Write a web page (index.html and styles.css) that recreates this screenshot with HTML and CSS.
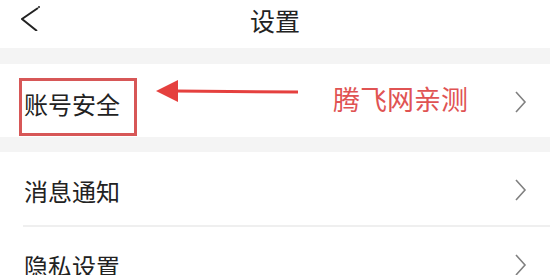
FILE: index.html
```html
<!DOCTYPE html>
<html lang="zh-CN">
<head>
<meta charset="utf-8">
<link rel="stylesheet" href="styles.css">
</head>
<body>
<div class="page">
  <header class="header">
    <svg class="back" width="20" height="28" viewBox="0 0 20 28"><polyline points="17,5 1,16 16,28" fill="none" stroke="#222" stroke-width="2"/><circle cx="18" cy="4" r="1" fill="#222"/></svg>
    <h1 class="title">设置</h1>
  </header>
  <div class="gap gap-top"></div>
  <div class="row row-first">
    <span class="label">账号安全</span>
    <svg class="chev" width="13" height="22" viewBox="0 0 13 22"><polyline points="2,1 11,11 2,21" fill="none" stroke="#808080" stroke-width="1.6"/></svg>
    <div class="mark-box"></div>
    <svg class="mark-arrow" width="144" height="24" viewBox="0 0 144 24"><polygon points="0,11 22,0 22,22" fill="#e5403e"/><line x1="20" y1="11" x2="142" y2="12" stroke="#e5403e" stroke-width="3"/></svg>
    <span class="mark-text">腾飞网亲测</span>
  </div>
  <div class="gap gap-mid"></div>
  <div class="row">
    <span class="label">消息通知</span>
    <svg class="chev" width="13" height="22" viewBox="0 0 13 22"><polyline points="2,1 11,11 2,21" fill="none" stroke="#808080" stroke-width="1.6"/></svg>
  </div>
  <div class="sep"></div>
  <div class="row">
    <span class="label">隐私设置</span>
    <svg class="chev" width="13" height="22" viewBox="0 0 13 22"><polyline points="2,1 11,11 2,21" fill="none" stroke="#808080" stroke-width="1.6"/></svg>
  </div>
</div>
</body>
</html>
```

FILE: styles.css
```css
* { box-sizing: border-box; }
html, body { margin: 0; padding: 0; background: #fff; }
body {
  font-family: "Noto Sans CJK SC", "Noto Sans", sans-serif;
  color: #222;
  width: 550px;
  height: 275px;
  overflow: hidden;
}
.page { display: flex; flex-direction: column; }
.header {
  position: relative;
  height: 48px;
  display: flex;
  align-items: center;
  justify-content: center;
}
.back { position: absolute; left: 21px; top: 3px; }
.title {
  margin: 0;
  font-size: 25px;
  font-weight: 400;
  line-height: 1;
  margin-top: -7px;
  color: #222;
}
.gap { background: #f4f4f4; }
.gap-top { height: 16px; }
.gap-mid { height: 15px; }
.row {
  position: relative;
  height: 73px;
  flex: 0 0 auto;
  display: flex;
  align-items: center;
  justify-content: space-between;
  padding: 0 23px 0 24px;
  background: #fff;
}
.label { font-size: 24px; line-height: 1; color: #222; margin-top: 4px; }
.row-first .label { margin-top: 6px; }
.chev { display: block; margin-top: 2px; }
.sep { height: 2px; margin-left: 23px; background: #efefef; }
.mark-box {
  position: absolute;
  left: 19px;
  top: 14px;
  width: 118px;
  height: 58px;
  border: 3px solid #d75757;
}
.mark-arrow { position: absolute; left: 156px; top: 16px; }
.mark-text {
  position: absolute;
  left: 333px;
  top: 21px;
  font-size: 27px;
  line-height: 1;
  color: #e05353;
}
```
